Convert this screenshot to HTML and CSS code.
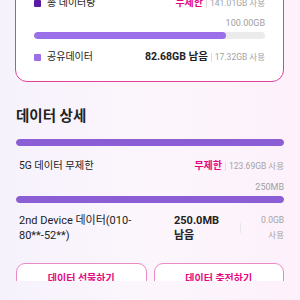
FILE: index.html
```html
<!DOCTYPE html>
<html lang="ko">
<head>
    <meta charset="UTF-8">
    <meta name="viewport" content="width=device-width, initial-scale=1.0">
    <title>데이터 사용량</title>
    <link rel="stylesheet" href="styles.css">
</head>
<body>
    <div class="page">
        <div class="card">
            <div class="row">
                <span class="dot dot-dark"></span>
                <span class="label">총 데이터량</span>
                <span class="right">
                    <span class="pink">무제한</span>
                    <span class="sep"></span>
                    <span class="muted">141.01GB 사용</span>
                </span>
            </div>
            <div class="cap">100.00GB</div>
            <div class="bar"><div class="fill" style="width: 83%"></div></div>
            <div class="row row-shared">
                <span class="dot dot-light"></span>
                <span class="label">공유데이터</span>
                <span class="right">
                    <span class="strong">82.68GB 남음</span>
                    <span class="sep"></span>
                    <span class="muted">17.32GB 사용</span>
                </span>
            </div>
        </div>

        <div class="detail">
            <h2 class="title">데이터 상세</h2>
            <div class="bar bar-full"><div class="fill" style="width: 100%"></div></div>
            <div class="line">
                <span class="name">5G 데이터 무제한</span>
                <span class="right">
                    <span class="pink">무제한</span>
                    <span class="sep"></span>
                    <span class="muted">123.69GB 사용</span>
                </span>
            </div>
            <div class="cap cap-detail">250MB</div>
            <div class="bar bar-full bar-second"><div class="fill" style="width: 100%"></div></div>
            <div class="device">
                <span class="device-name">2nd Device 데이터(010-<br>80**-52**)</span>
                <span class="device-left">250.0MB<br>남음</span>
                <span class="device-sep"></span>
                <span class="device-used">0.0GB<br>사용</span>
            </div>
            <div class="actions">
                <button class="btn">데이터 선물하기</button>
                <button class="btn">데이터 충전하기</button>
            </div>
        </div>
    </div>
</body>
</html>
```

FILE: styles.css
```css
body {
    margin: 0;
    padding: 0;
    font-family: Roboto, "Noto Sans CJK KR", sans-serif;
    color: #222;
    background: linear-gradient(90deg, #f6f2fc 0%, #fcf6fc 50%, #fdf1fb 100%);
    overflow: hidden;
}
.page {
    width: 300px;
    height: 300px;
}
.card {
    margin: -19px 16px 0 15px;
    padding: 14px 18px 17px 18px;
    background: #fff;
    border: 1.5px solid #e2409d;
    border-radius: 12px;
}
.row {
    display: flex;
    align-items: center;
    height: 14px;
    line-height: 14px;
}
.dot {
    width: 7px;
    height: 7px;
    border-radius: 1px;
    margin-right: 6px;
    flex: none;
}
.dot-dark {
    background: #5b1aa6;
}
.dot-light {
    background: #9b6eea;
}
.label {
    font-size: 10px;
}
.right {
    margin-left: auto;
    display: flex;
    align-items: center;
    white-space: nowrap;
}
.pink {
    color: #e4087f;
    font-weight: 700;
    font-size: 10px;
}
.strong {
    font-weight: 700;
    font-size: 10.5px;
}
.sep {
    width: 1px;
    height: 9px;
    background: #ddd;
    margin: 0 3px;
}
.muted {
    color: #a3a3a3;
    font-size: 8.5px;
}
.cap {
    margin-top: 7px;
    text-align: right;
    font-size: 9px;
    line-height: 12px;
    color: #a0a0a0;
}
.bar {
    margin-top: 3px;
    height: 7px;
    border-radius: 4px;
    background: #ebebeb;
    overflow: hidden;
}
.fill {
    height: 100%;
    border-radius: 4px;
    background: #9b6eea;
}
.row-shared {
    margin-top: 11px;
}
.detail {
    padding: 0 16px;
}
.title {
    margin: 25px 0 0;
    font-size: 14.5px;
    line-height: 20px;
    font-weight: 700;
}
.bar-full {
    margin-top: 12px;
}
.bar-full .fill {
    background: #8c5ed6;
}
.line {
    display: flex;
    align-items: center;
    margin-top: 13px;
    padding-left: 3px;
    line-height: 14px;
}
.name {
    font-size: 10.3px;
}
.cap-detail {
    margin-top: 8px;
}
.bar-second {
    margin-top: 3px;
}
.device {
    display: grid;
    grid-template-columns: 1fr 66px 1px 43px;
    align-items: center;
    margin-top: 10px;
    padding-left: 3px;
    line-height: 15px;
}
.device-name {
    font-size: 11px;
}
.device-left {
    font-size: 11px;
    font-weight: 700;
}
.device-sep {
    height: 10px;
    background: #e6e6e6;
}
.device-used {
    text-align: right;
    font-size: 8.5px;
    color: #a3a3a3;
}
.actions {
    display: flex;
    gap: 7px;
    margin-top: 20px;
}
.btn {
    flex: 1;
    height: 29px;
    padding: 0;
    font-family: Roboto, "Noto Sans CJK KR", sans-serif;
    font-size: 10px;
    font-weight: 700;
    color: #e4087f;
    background: #fff;
    border: 1.5px solid #e98ac6;
    border-radius: 9px;
}
```
